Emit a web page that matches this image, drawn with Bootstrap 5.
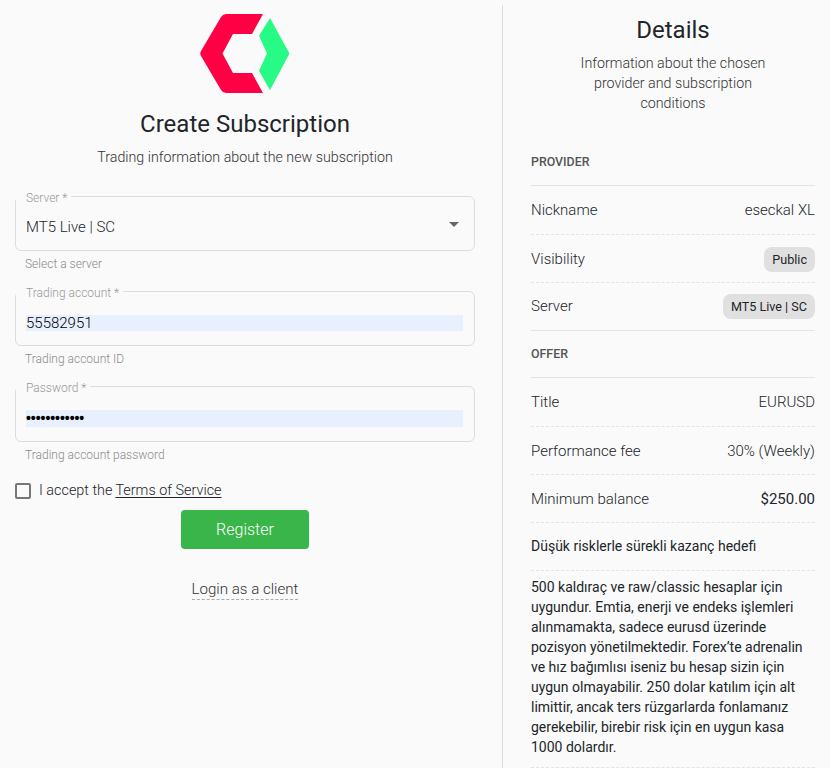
<!DOCTYPE html>
<html lang="en">
<head>
<meta charset="utf-8">
<title>Create Subscription</title>
<link rel="stylesheet" href="https://cdn.jsdelivr.net/npm/bootstrap@5.3.0/dist/css/bootstrap.min.css">
<style>
html,body{height:768px;overflow:hidden}
body{background:#fafafa;font-family:Roboto,"Liberation Sans",sans-serif;color:#212529;font-weight:300;font-size:15px}
.form-side{width:502px;padding:14px 27px 0 15px;flex:none}
.detail-side{width:328px;flex:none;border-left:1px solid #ddd;padding:0 15px 0 28px;height:763px;margin-top:5px}
.logo-svg{display:block;width:90px;height:80px;margin:0 auto}
.main-title{font-size:24px;font-weight:400;line-height:30px;margin:15px 0 0;text-align:center}
.main-sub{font-size:14.25px;font-weight:300;line-height:20px;margin:8px 0 0;text-align:center;color:#333}
.outline-box{border:1px solid #ddd;border-radius:6px;padding:0 10px;min-width:0;height:61px;margin:0}
.outline-box.spaced{height:62px}
.outline-box legend{float:none;width:auto;font-size:12px;line-height:12px;color:#999;padding:0 4px 0 10px;margin:0 0 0 -10px;font-weight:300;transform:translateY(2px)}
.outline-box.first-box{margin-top:23px}
.select-row{height:42px;display:flex;align-items:center;justify-content:space-between;font-size:15px;font-weight:300;padding-top:8px}
.caret-mark{width:0;height:0;border-left:5.5px solid transparent;border-right:5.5px solid transparent;border-top:5.5px solid #666;margin-right:5px;margin-top:-6px}
.autofill-field{display:block;width:calc(100% - 1px);height:16px;margin-top:18px;background:#e8f0fe;border:0;padding:0;font-size:15px;line-height:16px;font-weight:300;color:#000;white-space:nowrap}
.autofill-dots{font-weight:700;letter-spacing:-.05px;font-size:14px;line-height:17px;height:17px;font-family:"Liberation Sans",sans-serif}
.help-line{font-size:12px;line-height:14px;color:#8a8a8a;margin:6px 0 0 10px;font-weight:300}
.help-gap{margin-top:14px}
.accept-row{margin-top:19px;height:20px;font-size:14.4px;font-weight:300}
.check-square{width:16px;height:16px;border:2px solid #777;border-radius:2px;flex:none;margin-right:8px}
.accept-row a{color:#212529;font-weight:300;margin-left:3px;text-underline-offset:2px}
.btn-register{display:block;width:128px;height:39px;margin:9px auto 0;background:#39b54a;border:0;border-radius:4px;color:#fff;font-size:16px;font-weight:300;padding:0}
.login-wrap{text-align:center;margin-top:31px;line-height:19px}
.login-link{color:#333;text-decoration:none;font-size:15.1px;font-weight:300;line-height:19px;border-bottom:1px dashed #aaa;display:inline-block}
.detail-title{font-size:24px;font-weight:400;line-height:30px;text-align:center;margin:0;padding-top:10px}
.detail-sub{font-size:14.25px;font-weight:300;line-height:20px;text-align:center;margin:8px auto 0;color:#333;width:220px}
.section-head{font-size:12.4px;font-weight:500;color:#555;text-transform:uppercase;line-height:14px;padding:0;height:47px;display:flex;align-items:center;border-bottom:1px solid #e3e3ec}
.section-head.top-head{margin-top:25px;height:48px}
.info-row{height:48.4px;display:flex;justify-content:space-between;align-items:center;border-bottom:1px dashed #e3e3e8;font-size:15px;font-weight:300}
.info-row.first-row{padding-top:1px;height:48.9px}
.info-row.solid-end{border-bottom:1px solid #e3e3ec;height:47.9px}
.info-row.nudged{padding-top:1px}
.info-strong{font-weight:400}
.soft-pill{background:#e0e0e0;border-radius:8px;font-size:12.6px;font-weight:400;line-height:25px;height:25px;padding:0 8px;color:#212529}
.desc-line{font-size:14px;font-weight:400;line-height:20px;padding:6px 0 10px;border-bottom:1px dashed #e3e3e8;color:#212529}
.desc-head{height:48px;display:flex;align-items:center;padding:0 0 2px}
</style>
</head>
<body>
<div class="d-flex">
  <div class="form-side">
    <svg class="logo-svg" viewBox="200 14 90 80" aria-label="Logo">
      <path fill="#ff0045" d="M263 14H226q-3 0-5 3L201 51q-1.500 2.500 0 5l20 34q2 3 5 3h37l-11-20h-19l-10.500-19.500L233 34h19z"/>
      <path fill="#27fb85" d="M270 18l19.500 35.500L270 90l-11-19.300 8-17.200-8-17.800z"/>
    </svg>
    <h1 class="main-title">Create Subscription</h1>
    <p class="main-sub">Trading information about the new subscription</p>
    <form>
      <fieldset class="outline-box first-box">
        <legend>Server *</legend>
        <div class="select-row"><span>MT5 Live | SC</span><span class="caret-mark"></span></div>
      </fieldset>
      <div class="help-line">Select a server</div>
      <fieldset class="outline-box help-gap">
        <legend>Trading account *</legend>
        <div class="autofill-field">55582951</div>
      </fieldset>
      <div class="help-line">Trading account ID</div>
      <fieldset class="outline-box spaced help-gap">
        <legend>Password *</legend>
        <div class="autofill-field autofill-dots">••••••••••••</div>
      </fieldset>
      <div class="help-line">Trading account password</div>
      <div class="accept-row d-flex align-items-center">
        <span class="check-square"></span><span>I accept the</span><a href="#">Terms of Service</a>
      </div>
      <button type="button" class="btn btn-register">Register</button>
      <div class="login-wrap"><a class="login-link" href="#">Login as a client</a></div>
    </form>
  </div>
  <div class="detail-side">
    <h2 class="detail-title">Details</h2>
    <p class="detail-sub">Information about the chosen provider and subscription conditions</p>
    <div class="section-head top-head">Provider</div>
    <div class="info-row first-row"><span>Nickname</span><span>eseckal XL</span></div>
    <div class="info-row nudged"><span>Visibility</span><span class="soft-pill">Public</span></div>
    <div class="info-row solid-end"><span>Server</span><span class="soft-pill">MT5 Live | SC</span></div>
    <div class="section-head">Offer</div>
    <div class="info-row"><span>Title</span><span>EURUSD</span></div>
    <div class="info-row nudged"><span>Performance fee</span><span>30% (Weekly)</span></div>
    <div class="info-row nudged"><span>Minimum balance</span><span class="info-strong">$250.00</span></div>
    <div class="desc-line desc-head">Düşük risklerle sürekli kazanç hedefi</div>
    <div class="desc-line">500 kaldıraç ve raw/classic hesaplar için uygundur. Emtia, enerji ve endeks işlemleri alınmamakta, sadece eurusd üzerinde pozisyon yönetilmektedir. Forex’te adrenalin ve hız bağımlısı iseniz bu hesap sizin için uygun olmayabilir. 250 dolar katılım için alt limittir, ancak ters rüzgarlarda fonlamanız gerekebilir, birebir risk için en uygun kasa 1000 dolardır.</div>
  </div>
</div>
</body>
</html>
